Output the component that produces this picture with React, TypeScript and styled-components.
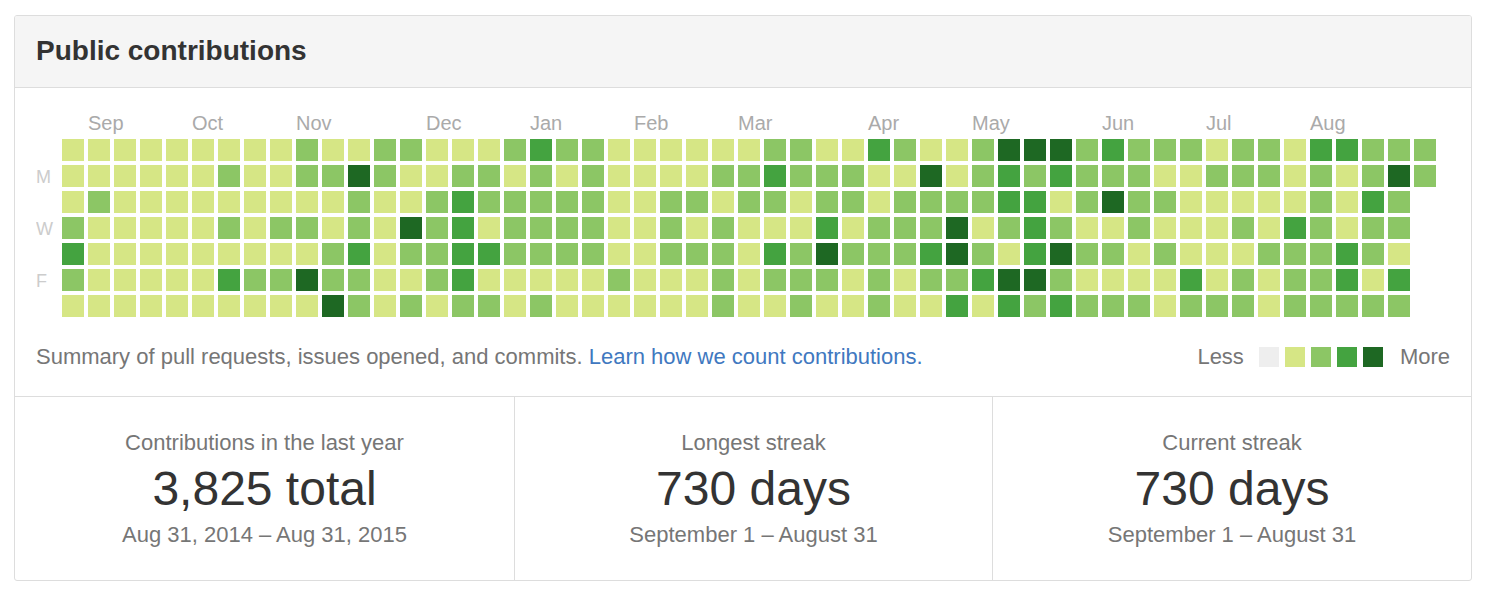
import React from "react";
import styled, { createGlobalStyle } from "styled-components";

const GlobalStyle = createGlobalStyle`
  body {
    margin: 0;
    background: #fff;
    font-family: "Liberation Sans", Arial, sans-serif;
  }
`;

// contribution levels per weekday row (Sun..Sat), one digit per week
const rows = [
  "1111111112112" + "21112322111111" + "22113211244423" + "222122133222",
  "1111112112242" + "11221212111122" + "32221141232322" + "211222121242",
  "1211111111121" + "12322222112212" + "21221222233124" + "22111112132",
  "2111112122121" + "42312222112121" + "11312224123211" + "21112132122",
  "3111111111231" + "22332222112221" + "32422234213422" + "12111222321",
  "2111113224221" + "12311111211121" + "22212122344211" + "11312122313",
  "1111111111421" + "21221211111121" + "12112113132322" + "21222122222",
];

const colors = ["#eeeeee", "#d6e685", "#8cc665", "#44a340", "#1e6823"];

const months = [
  ["Sep", 1], ["Oct", 5], ["Nov", 9], ["Dec", 14], ["Jan", 18], ["Feb", 22],
  ["Mar", 26], ["Apr", 31], ["May", 35], ["Jun", 40], ["Jul", 44], ["Aug", 48],
] as const;

const days = [["M", 1], ["W", 3], ["F", 5]] as const;

const CELL = 22;
const STEP = 26;
const LEFT = 26;
const TOP = 35;

const stats = [
  { label: "Contributions in the last year", value: "3,825 total", range: "Aug 31, 2014 – Aug 31, 2015" },
  { label: "Longest streak", value: "730 days", range: "September 1 – August 31" },
  { label: "Current streak", value: "730 days", range: "September 1 – August 31" },
];

const Page = styled.div`
  padding: 15px 14px;
`;

const Box = styled.div`
  width: 1458px;
  box-sizing: border-box;
  border: 1px solid #dddddd;
  border-radius: 3px;
  overflow: hidden;
`;

const Header = styled.div`
  height: 72px;
  display: flex;
  align-items: center;
  padding: 0 21px 2px;
  box-sizing: border-box;
  background: #f5f5f5;
  border-bottom: 1px solid #dddddd;
`;

const Title = styled.h3`
  margin: 0;
  font-size: 28px;
  font-weight: bold;
  color: #333333;
`;

const Calendar = styled.div`
  padding: 16px 21px 23px;
  border-bottom: 1px solid #dddddd;
`;

const Graph = styled.svg`
  display: block;
`;

const MonthText = styled.text`
  font-size: 20px;
  fill: #aaaaaa;
  font-family: "Liberation Sans", Arial, sans-serif;
`;

const DayText = styled.text`
  font-size: 18px;
  fill: #cccccc;
  font-family: "Liberation Sans", Arial, sans-serif;
`;

const Footer = styled.div`
  margin-top: 22px;
  height: 32px;
  display: flex;
  align-items: center;
  justify-content: space-between;
  font-size: 22px;
  color: #767676;
`;

const Link = styled.a`
  color: #4078c0;
  text-decoration: none;
`;

const Legend = styled.div`
  display: flex;
  align-items: center;
`;

const LegendLabel = styled.span<{ $side: "left" | "right" }>`
  margin-left: ${(p) => (p.$side === "right" ? "17px" : "0")};
  margin-right: ${(p) => (p.$side === "left" ? "15px" : "0")};
`;

const Swatch = styled.span<{ $color: string }>`
  width: 20px;
  height: 20px;
  background: ${(p) => p.$color};
  & + & {
    margin-left: 6px;
  }
`;

const Stats = styled.div`
  display: grid;
  grid-template-columns: 499px 478px 1fr;
`;

const Column = styled.div`
  padding: 31px 10px 30px;
  text-align: center;
  & + & {
    border-left: 1px solid #dddddd;
  }
`;

const Muted = styled.div`
  font-size: 22px;
  line-height: 30px;
  color: #767676;
`;

const Number = styled.div`
  font-size: 48px;
  line-height: 62px;
  color: #333333;
`;

const App = () => {
  return (
    <Page>
      <GlobalStyle />
      <Box>
        <Header>
          <Title>Public contributions</Title>
        </Header>
        <Calendar>
          <Graph width={1400} height={215}>
            {months.map(([name, col]) => (
              <MonthText key={name} x={LEFT + col * STEP} y={26}>
                {name}
              </MonthText>
            ))}
            {days.map(([name, row]) => (
              <DayText key={name} x={0} y={TOP + row * STEP + 17.5}>
                {name}
              </DayText>
            ))}
            {rows.map((row, r) =>
              row.split("").map((lvl, c) => (
                <rect
                  key={r + "-" + c}
                  x={LEFT + c * STEP}
                  y={TOP + r * STEP}
                  width={CELL}
                  height={CELL}
                  fill={colors[+lvl]}
                />
              ))
            )}
          </Graph>
          <Footer>
            <span>
              Summary of pull requests, issues opened, and commits.{" "}
              <Link href="#">Learn how we count contributions.</Link>
            </span>
            <Legend>
              <LegendLabel $side="left">Less</LegendLabel>
              {colors.map((c) => (
                <Swatch key={c} $color={c} />
              ))}
              <LegendLabel $side="right">More</LegendLabel>
            </Legend>
          </Footer>
        </Calendar>
        <Stats>
          {stats.map((s) => (
            <Column key={s.label}>
              <Muted>{s.label}</Muted>
              <Number>{s.value}</Number>
              <Muted>{s.range}</Muted>
            </Column>
          ))}
        </Stats>
      </Box>
    </Page>
  );
};

export default App;
